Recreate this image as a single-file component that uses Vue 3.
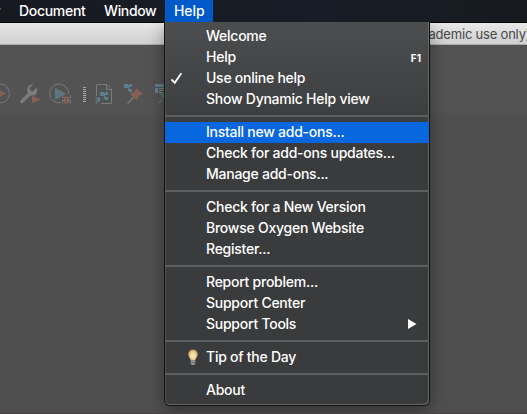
<script setup>
const groups = [
  [
    { label: 'Welcome' },
    { label: 'Help', key: 'F1' },
    { label: 'Use online help', checked: true },
    { label: 'Show Dynamic Help view' }
  ],
  [
    { label: 'Install new add-ons...', active: true },
    { label: 'Check for add-ons updates...' },
    { label: 'Manage add-ons...' }
  ],
  [
    { label: 'Check for a New Version' },
    { label: 'Browse Oxygen Website' },
    { label: 'Register...' }
  ],
  [
    { label: 'Report problem...' },
    { label: 'Support Center' },
    { label: 'Support Tools', submenu: true }
  ],
  [{ label: 'Tip of the Day', bulb: true }],
  [{ label: 'About' }]
]
</script>

<template>
  <div class="screen">
    <nav class="menubar">
      <span class="clipped">r</span>
      <span class="entry document">Document</span>
      <span class="entry window">Window</span>
      <span class="entry open">Help</span>
    </nav>

    <header class="titlebar"><span>ademic use only)</span></header>

    <div class="toolbar">
      <svg class="icons" width="180" height="30" viewBox="0 0 180 30" fill="none">
        <!-- run -->
        <circle cx="0" cy="15.500" r="9.500" stroke="#777" />
        <path d="M-4 10L6 15.500L-4 21Z" fill="#855f57" />
        <!-- configure -->
        <path d="M22 23.500L29 16.500" stroke="#7b7b7b" stroke-width="3.600" stroke-linecap="round" />
        <path d="M33.500 6.200C29 6 26.500 9.500 27.500 13.500C27.500 18.500 34 19.500 36.500 15.500C37.500 13.500 37.300 11.500 36.600 9.800L33 13.200L30.100 12.500L29.600 9.800Z" fill="#7b7b7b" />
        <path d="M31.500 17L41 21.500L31.500 26.500Z" fill="#535353" />
        <path d="M32 17.500L40.500 21.500L32 25.500Z" fill="#855f57" />
        <!-- debug -->
        <path d="M61 24.800A9.500 9.500 0 1 1 68.600 16" stroke="#7b7b7b" />
        <path d="M55 9.500L66 15.800L55 22Z" fill="#5c7780" />
        <path d="M62.500 17v2.500h8V17M62.500 25.500v-3h8v3" stroke="#777" />
        <rect x="64" y="18.500" width="5" height="7.500" rx="2" fill="#8b6259" />
        <path d="M66.500 19.500v6.500" stroke="#5a5a5a" />
        <!-- grip -->
        <path d="M84.500 9v16" stroke="#aaa" stroke-width="3" stroke-dasharray="1 1" />
        <!-- document tree -->
        <path d="M96.500 18V6.500H107L111.500 11V25.500H101M106.500 6.500V11.500H111.500" stroke="#7b7b7b" />
        <path d="M100 14h4v4h-4zM105 14h3v3h-3zM105 19h3v3h-3zM95 19.500h5v5l-1.700-1.700L96.500 26L95 24.500l2.500-2.500z" fill="#5c7f8c" />
        <path d="M103 15.500h3M104.500 15.500v5h1" stroke="#5c7f8c" />
        <!-- pinned tree -->
        <path d="M124 6h4v4h-4zM129 6h3v3h-3zM129 11h3v3h-3z" fill="#5c7f8c" />
        <path d="M127 7.500h3M128.500 7.500v5h1" stroke="#5c7f8c" />
        <path d="M134 19L127.500 25.500" stroke="#7b7b7b" stroke-width="1.500" />
        <path d="M136 10L143 16.500L140 17L137.500 19.500L137 22.500L129.500 15.500L132.500 15L135.500 13Z" fill="#855f57" />
        <!-- table -->
        <path d="M155 6h9v3h-9zM155 10h3v5h-3z" fill="#5c7f8c" />
        <path d="M159 10.500h5M159 12.500h5M159 14.500h3" stroke="#7b7b7b" />
        <path d="M160 16.500l4-3v8z" fill="#527358" />
        <path d="M158.500 25l4-4" stroke="#7b7b7b" />
      </svg>
    </div>
    <main class="workspace"></main>

    <div class="menu">
      <div v-for="(group, g) in groups" :key="g" class="group">
        <div v-for="item in group" :key="item.label" class="item" :class="{ active: item.active }">
          <span class="mark">
            <svg v-if="item.checked" class="check" width="13" height="13" viewBox="0 0 13 13">
              <path d="M1.500 7.500L4.800 10.800L11.300 1.300" fill="none" stroke="#fff" stroke-width="1.900" />
            </svg>
            <svg v-if="item.bulb" class="bulb" width="12" height="17" viewBox="0 0 12 17">
              <defs>
                <radialGradient id="glow" cx=".5" cy=".55" r=".6">
                  <stop offset="0" stop-color="#fff0bd" />
                  <stop offset=".6" stop-color="#e6cb91" />
                  <stop offset="1" stop-color="#b3843f" />
                </radialGradient>
              </defs>
              <path d="M6 .6C3.100 .6 1.300 2.600 1.300 5.200C1.300 8 3.600 9 3.700 11.500H8.300C8.400 9 10.700 8 10.700 5.200C10.700 2.600 8.900 .6 6 .6Z" fill="url(#glow)" />
              <path d="M3.700 11.500h4.600v3.300L7 16H5l-1.300-1.200z" fill="#9a9a9a" />
              <path d="M3.700 13.500h4.600" stroke="#5d5d5d" stroke-width=".8" />
            </svg>
          </span>
          <span class="label">{{ item.label }}</span>
          <span v-if="item.key" class="key">{{ item.key }}</span>
          <svg v-if="item.submenu" class="arrow" width="9" height="10" viewBox="0 0 9 10">
            <path d="M0 0L8.500 5L0 10Z" fill="#fff" />
          </svg>
        </div>
      </div>
    </div>
  </div>
</template>

<style>
body {
  margin: 0;
}
</style>

<style scoped>
.screen {
  position: relative;
  display: flex;
  flex-direction: column;
  width: 527px;
  height: 414px;
  overflow: hidden;
  box-sizing: border-box;
  border-bottom: 1px solid #484042;
  background: #4f4f4f;
  font-family: Inter, 'Liberation Sans', sans-serif;
  font-size: 14px;
}
.menubar {
  display: flex;
  flex: none;
  height: 22px;
  line-height: 22px;
  color: #fff;
  font-weight: 500;
  background: linear-gradient(90deg, #181a22, #171c26 60%, #171b20);
}
.clipped {
  width: 10px;
  margin-left: -5px;
  margin-right: 5px;
}
.entry {
  box-sizing: border-box;
  white-space: nowrap;
}
.document {
  width: 85px;
  padding-left: 9px;
  letter-spacing: -0.3px;
}
.window {
  width: 70px;
  padding-left: 9px;
  letter-spacing: -0.35px;
}
.open {
  width: 48px;
  padding-left: 9px;
  letter-spacing: -0.1px;
  background: #0059c8;
}
.titlebar {
  flex: none;
  box-sizing: border-box;
  height: 23px;
  padding-left: 428.5px;
  border-top: 1px solid #050505;
  border-bottom: 1px solid #aaa;
  line-height: 23px;
  color: #484848;
  font-size: 13px;
  letter-spacing: -0.2px;
  white-space: nowrap;
  background: linear-gradient(#e8e8e8, #d0d0d0);
}
.toolbar {
  flex: none;
  box-sizing: border-box;
  height: 70px;
  padding-top: 33px;
  background: #535353;
}
.icons {
  display: block;
}
.workspace {
  flex: 1;
  background: #4f4f4f;
}
.menu {
  position: absolute;
  left: 165px;
  top: 22px;
  width: 264px;
  height: 383px;
  box-sizing: border-box;
  padding-top: 4px;
  border-radius: 0 0 5px 5px;
  color: #fff;
  font-weight: 500;
  background: linear-gradient(#4c4d4f, #414244 70px, #3a3b3d 110px, #3a3b3d);
  box-shadow: inset -1px -1px #666769, inset 1px 0 #505153, 0 0 0 1px #111, 0 5px 18px rgba(0, 0, 0, 0.4);
  clip-path: inset(0 -40px -40px -40px);
}
.group + .group {
  margin-top: 5px;
  padding-top: 5px;
  border-top: 2px solid #5d5e60;
}
.item {
  display: flex;
  align-items: center;
  height: 21px;
}
.active {
  background: #0867df;
}
.mark {
  flex: none;
  display: flex;
  align-items: center;
  width: 41px;
  height: 21px;
}
.check {
  margin-left: 5px;
  margin-bottom: 1px;
}
.bulb {
  margin-left: 22px;
}
.label {
  flex: 1;
  height: 21px;
  line-height: 19px;
  white-space: nowrap;
  letter-spacing: -0.25px;
}
.key {
  margin-right: 8px;
  font-size: 10px;
  font-weight: 700;
}
.arrow {
  margin-right: 12px;
  margin-bottom: 1px;
}
</style>
